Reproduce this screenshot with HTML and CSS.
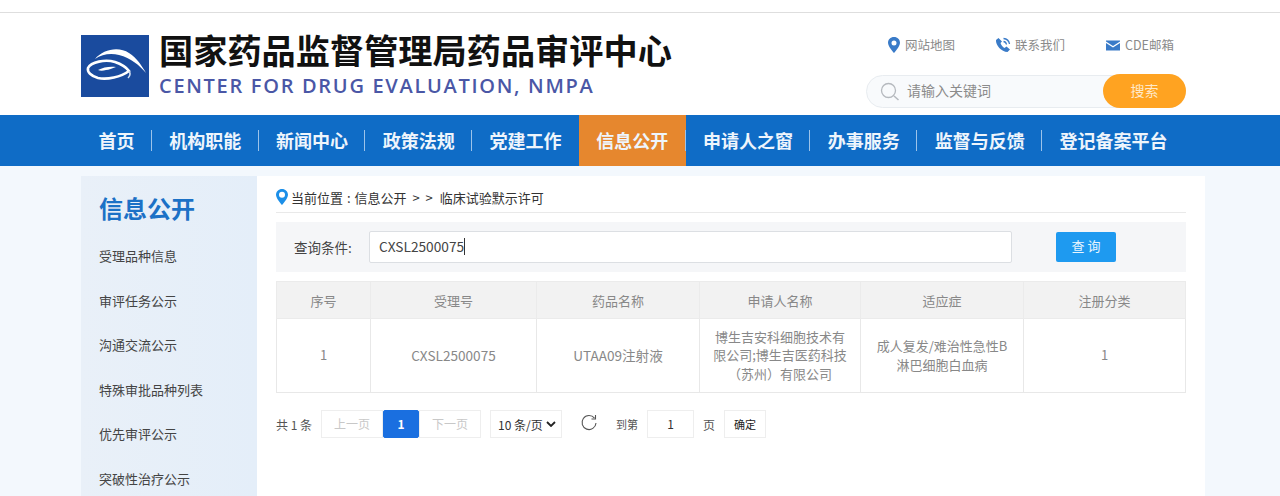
FILE: index.html
```html
<!DOCTYPE html>
<html lang="zh-CN">
<head>
  <meta charset="UTF-8" />
  <meta name="viewport" content="width=device-width, initial-scale=1.0"/>
  <title>国家药品监督管理局药品审评中心</title>
  <link rel="stylesheet" href="styles.css">
</head>
<body>
  <div class="topline"></div>

  <!-- Header: logo, quick links, search -->
  <header class="header">
    <div class="brand">
      <svg class="logo" viewBox="0 0 68 62" aria-hidden="true">
        <rect width="68" height="62" fill="#1a4b9e"/>
        <path d="M14 24C22 14 38 11 48 18C56 23 61 31 65 38C58 30 50 23 38 20C30 18 21 19 14 24Z" fill="#fff"/>
        <path d="M7 33C10 27 24 24 34 27C40 29 45 32 48 36C40 42 26 45 17 43C10 41 6 37 7 33Z" fill="none" stroke="#fff" stroke-width="2.600"/>
        <path d="M17 35C22 32 30 31 35 32C31 33 28 35 25 35C22 36 19 36 17 35Z" fill="#fff"/>
        <path d="M48 36C50 39 49 41 47 43" fill="none" stroke="#cfdcf0" stroke-width="1.500"/>
      </svg>
      <div class="brand-text">
        <div class="brand-cn">国家药品监督管理局药品审评中心</div>
        <div class="brand-en">CENTER FOR DRUG EVALUATION, NMPA</div>
      </div>
    </div>
    <div class="tools">
      <div class="quick-links">
        <a class="quick-link">
          <svg class="quick-icon pin" viewBox="0 0 14 16"><path fill-rule="evenodd" d="M7 0C3.400 0 1 2.600 1 5.800 1 9.600 7 16 7 16s6-6.400 6-10.200C13 2.600 10.600 0 7 0Zm0 3.400a2.500 2.500 0 1 1 0 5 2.500 2.500 0 0 1 0-5Z" fill="#3a7bc8"/></svg>
          网站地图
        </a>
        <a class="quick-link">
          <svg class="quick-icon" viewBox="0 0 16 16"><path d="M3.500 1 1 3c-.5 5 5.500 12 11.500 12l2.500-2.500-3.500-3-2 1.500C8 10.500 6 8 5.500 6l1.500-1.500Z" fill="#3a7bc8"/><path d="M8.500 1.500c3 .3 5.500 2.500 6 5.500M8.500 4.500c1.500.2 2.700 1.300 3 3" fill="none" stroke="#3a7bc8" stroke-width="1.300"/></svg>
          联系我们
        </a>
        <a class="quick-link">
          <svg class="quick-icon" viewBox="0 0 16 16"><path d="M1 3.500h14v1L8 9 1 4.500Z" fill="#3a7bc8"/><path d="M1 6 8 10.500 15 6v7.500H1Z" fill="#3a7bc8"/></svg>
          CDE邮箱
        </a>
      </div>
      <div class="search">
        <svg class="search-icon" viewBox="0 0 20 20"><circle cx="8.500" cy="8.500" r="7" fill="none" stroke="#b5b9be" stroke-width="1.300"/><path d="M14 14l4.500 4" stroke="#b5b9be" stroke-width="1.500"/></svg>
        <span class="search-text">请输入关键词</span>
        <span class="search-btn">搜索</span>
      </div>
    </div>
  </header>

  <nav class="nav">
    <a class="nav-item">首页</a>
    <a class="nav-item">机构职能</a>
    <a class="nav-item">新闻中心</a>
    <a class="nav-item">政策法规</a>
    <a class="nav-item no-line">党建工作</a>
    <a class="nav-item active">信息公开</a>
    <a class="nav-item">申请人之窗</a>
    <a class="nav-item">办事服务</a>
    <a class="nav-item">监督与反馈</a>
    <a class="nav-item no-line">登记备案平台</a>
  </nav>

  <div class="page">
    <aside class="sidebar">
      <h2 class="side-title">信息公开</h2>
      <a class="side-item">受理品种信息</a>
      <a class="side-item">审评任务公示</a>
      <a class="side-item">沟通交流公示</a>
      <a class="side-item">特殊审批品种列表</a>
      <a class="side-item">优先审评公示</a>
      <a class="side-item">突破性治疗公示</a>
    </aside>

    <main class="main">
      <div class="crumb">
        <svg class="crumb-icon" viewBox="0 0 12 16"><path fill-rule="evenodd" d="M6 0C2.700 0 0 2.600 0 5.800 0 9.800 6 16 6 16s6-6.200 6-10.200C12 2.600 9.300 0 6 0Zm0 2.800a3 3 0 1 1 0 6 3 3 0 0 1 0-6Z" fill="#1c8fe8"/></svg>
        <span class="crumb-here">当前位置 : 信息公开</span>
        <span class="crumb-sep">&gt; &gt;</span>
        <span>临床试验默示许可</span>
      </div>

      <!-- Query bar -->
      <div class="query">
        <span class="query-label">查询条件:</span>
        <div class="query-input">CXSL2500075<span class="caret"></span></div>
        <span class="query-btn">查 询</span>
      </div>

      <table class="result">
        <thead>
          <tr>
            <th class="col-no">序号</th>
            <th class="col-id">受理号</th>
            <th class="col-drug">药品名称</th>
            <th class="col-corp">申请人名称</th>
            <th class="col-ind">适应症</th>
            <th>注册分类</th>
          </tr>
        </thead>
        <tbody>
          <tr>
            <td>1</td>
            <td class="cell-code">CXSL2500075</td>
            <td class="cell-code">UTAA09注射液</td>
            <td>博生吉安科细胞技术有限公司;博生吉医药科技（苏州）有限公司</td>
            <td>成人复发/难治性急性B淋巴细胞白血病</td>
            <td>1</td>
          </tr>
        </tbody>
      </table>

      <!-- Pager -->
      <div class="pager">
        <span class="pager-total">共 1 条</span>
        <div class="pager-pages">
          <span class="page-btn off">上一页</span>
          <span class="page-btn current">1</span>
          <span class="page-btn off">下一页</span>
        </div>
        <span class="page-size">10 条/页
          <svg class="chevron" viewBox="0 0 10 6"><path d="M1 1l4 4 4-4" fill="none" stroke="#222" stroke-width="1.800"/></svg>
        </span>
        <svg class="refresh" viewBox="0 0 18 18"><path d="M14.500 4.200A7 7 0 1 0 16 9" fill="none" stroke="#555" stroke-width="1.100"/><path d="M15.500 1v4h-4" fill="none" stroke="#555" stroke-width="1.100"/></svg>
        <span class="pager-label goto">到第</span>
        <span class="page-input">1</span>
        <span class="pager-label">页</span>
        <span class="page-ok">确定</span>
      </div>
    </main>
  </div>
</body>
</html>
```

FILE: styles.css
```css
/* Global */
html, body {
  height: 100%;
  overflow: hidden;
}

body {
  margin: 0;
  background-color: #f3f8fd;
  color: #333;
  font-family: "Noto Sans CJK SC", "Noto Sans", sans-serif;
}

.topline {
  height: 12px;
  background: #fff;
  border-bottom: 1px solid #dedede;
}

/* Header */
.header {
  height: 102px;
  background: #fff;
  display: flex;
  justify-content: space-between;
  padding: 0 94px 0 81px;
}

.brand {
  display: flex;
  gap: 10px;
  padding-top: 22px;
}

.logo {
  width: 68px;
  height: 62px;
}

.brand-cn {
  font-size: 34.200px;
  font-weight: 700;
  line-height: 32px;
  color: #111;
  margin-top: -2px;
}

.brand-en {
  font-family: "Open Sans", sans-serif;
  font-size: 20px;
  font-weight: 600;
  line-height: 26px;
  letter-spacing: 1.700px;
  color: #4a57a6;
  margin-top: 8px;
}

.tools {
  width: 320px;
  display: flex;
  flex-direction: column;
}

.quick-links {
  display: flex;
  padding: 23px 0 0 21px;
  height: 39px;
  gap: 40px;
}

.quick-link {
  display: flex;
  align-items: center;
  height: 17px;
  gap: 4px;
  font-size: 12.500px;
  color: #8a8a8a;
}

.quick-icon {
  width: 16px;
  height: 16px;
}

.quick-icon.pin {
  width: 14px;
}

.search {
  position: relative;
  width: 320px;
  height: 33px;
  box-sizing: border-box;
  border: 1px solid #e8ecf0;
  border-radius: 17px;
  background: #f8fafc;
  display: flex;
  align-items: center;
  padding-left: 13px;
}

.search-icon {
  width: 20px;
  height: 20px;
}

.search-text {
  margin: -3px 0 0 7px;
  font-size: 14px;
  color: #8b8b8b;
}

/* sits over the right end of the pill */
.search-btn {
  position: absolute;
  right: -1px;
  top: -2px;
  width: 83px;
  height: 34px;
  border-radius: 17px;
  background: #ffa321;
  color: #ffe9c9;
  font-size: 14px;
  line-height: 32px;
  text-align: center;
}

/* Nav */
.nav {
  height: 51px;
  background: #0f6cc6;
  display: flex;
  align-items: center;
  padding-left: 81px;
}

.nav-item {
  position: relative;
  height: 51px;
  line-height: 51px;
  padding: 0 17.400px;
  font-size: 18px;
  font-weight: 700;
  color: #eef5fc;
  white-space: nowrap;
}

.nav-item::after {
  content: "";
  position: absolute;
  right: 0;
  top: 15px;
  height: 21px;
  width: 1px;
  background: #9cc3ea;
}

.nav-item.no-line::after {
  display: none;
}

.nav-item.active {
  background: #e6872e;
}

/* Body columns */
.page {
  display: flex;
  margin: 10px 75px 0 81px;
  height: 320px;
}

.sidebar {
  width: 176px;
  flex: none;
  box-sizing: border-box;
  padding: 15px 0 0 18px;
  background: linear-gradient(90deg, #e9f0f8, #e4eef9);
}

.side-title {
  margin: 0 0 9px;
  font-size: 24px;
  font-weight: 700;
  line-height: 34px;
  color: #1c71c6;
}

.side-item {
  display: block;
  height: 44.600px;
  line-height: 44.600px;
  font-size: 13px;
  color: #444;
}

.main {
  flex: 1;
  background: #fff;
  padding: 0 19px;
  min-width: 0;
}

/* Breadcrumb */
.crumb {
  height: 37px;
  box-sizing: border-box;
  border-bottom: 1px solid #e9e9e9;
  display: flex;
  align-items: center;
  gap: 3px;
  font-size: 13px;
  color: #333;
  padding-top: 6px;
  margin-bottom: 9px;
}

.crumb-icon {
  width: 12px;
  height: 16px;
}

.crumb-here {
  word-spacing: 1px;
}

.crumb-sep {
  margin: 0 4px 0 3px;
  word-spacing: 3px;
}

/* Query bar */
.query {
  height: 50px;
  background: #f5f6f8;
  display: flex;
  align-items: center;
  padding-left: 18px;
  margin-bottom: 9px;
}

.query-label {
  width: 75px;
  flex: none;
  font-size: 13.500px;
  color: #444;
}

.query-input {
  width: 643px;
  height: 32px;
  box-sizing: border-box;
  border: 1px solid #dcdfe3;
  border-radius: 2px;
  background: #fff;
  padding: 0 0 2px 9px;
  font-size: 13.700px;
  color: #444;
  display: flex;
  align-items: center;
}

.caret {
  width: 1px;
  height: 17px;
  background: #333;
}

.query-btn {
  width: 60px;
  height: 30px;
  margin: -1px 0 0 44px;
  border-radius: 2px;
  background: #1e9af0;
  color: #e8f5fe;
  font-size: 13px;
  line-height: 28px;
  text-align: center;
}

/* Table */
.result {
  width: 910px;
  table-layout: fixed;
  border-collapse: collapse;
  font-size: 13px;
  color: #888;
  text-align: center;
}

.result th {
  height: 36px;
  padding: 0;
  background: #f2f2f2;
  border: 1px solid #ebebeb;
  font-weight: 400;
}

.result td {
  height: 73px;
  padding: 0 12px;
  border: 1px solid #e8e8e8;
  line-height: 18.500px;
}

.result .cell-code {
  font-size: 13.600px;
}

.col-no { width: 93px; }
.col-id { width: 165px; }
.col-drug { width: 162px; }
.col-corp { width: 160px; }
.col-ind { width: 162px; }

/* Pager */
.pager {
  display: flex;
  align-items: center;
  height: 28px;
  margin-top: 17px;
  font-size: 12px;
  color: #555;
}

.pager-total {
  width: 45px;
  flex: none;
}

.pager-pages {
  display: flex;
  width: 160px;
}

.page-btn {
  box-sizing: border-box;
  width: 62px;
  height: 28px;
  line-height: 26px;
  text-align: center;
  border: 1px solid #eeeeee;
  background: #fff;
}

.page-btn.off {
  color: #c8c8c8;
}

.page-btn.current {
  width: 36px;
  border-color: #1a6fe0;
  border-radius: 2px;
  background: #1a6fe0;
  color: #fff;
  font-weight: 700;
}

.page-size {
  box-sizing: border-box;
  width: 72px;
  height: 28px;
  margin-left: 9px;
  padding-left: 7px;
  border: 1px solid #eeeeee;
  display: flex;
  align-items: center;
  justify-content: space-between;
  padding-right: 5px;
  color: #333;
}

.chevron {
  width: 10px;
  height: 6px;
}

.refresh {
  width: 18px;
  height: 18px;
  margin: -3px 0 0 18px;
}

.pager-label {
  margin-left: 9px;
}

.pager-label.goto {
  margin-left: 18px;
  font-size: 11px;
}

.page-input {
  box-sizing: border-box;
  width: 47px;
  height: 28px;
  margin-left: 9px;
  border: 1px solid #eeeeee;
  line-height: 26px;
  text-align: center;
  color: #333;
}

.page-ok {
  box-sizing: border-box;
  width: 42px;
  height: 28px;
  margin-left: 9px;
  border: 1px solid #eeeeee;
  line-height: 26px;
  text-align: center;
  font-size: 11px;
  color: #222;
}
```
